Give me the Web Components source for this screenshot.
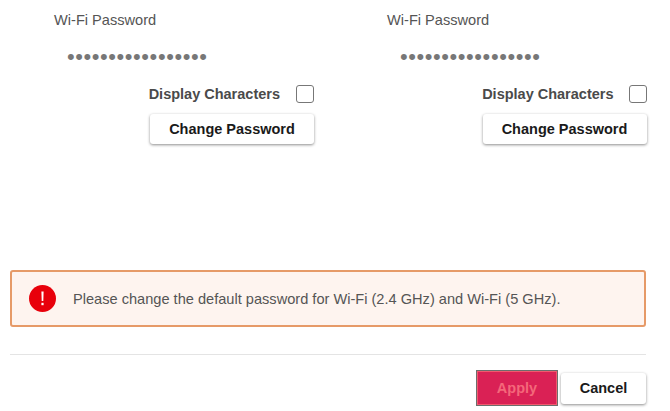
<!DOCTYPE html>
<html>
<head>
<meta charset="utf-8">
<style>
  html, body { margin: 0; background: #fff; }
  body { width: 670px; height: 411px; overflow: hidden; font-family: "Liberation Sans", Arial, sans-serif; }
  app-page { width: 670px; height: 411px; }
</style>
</head>
<body>
<app-page>
  <password-panel slot="panels"></password-panel>
  <password-panel slot="panels"></password-panel>
  <alert-box slot="alert">Please change the default password for Wi-Fi (2.4 GHz) and Wi-Fi (5 GHz).</alert-box>
  <flat-button slot="actions" kind="apply">Apply</flat-button>
  <flat-button slot="actions" kind="cancel">Cancel</flat-button>
</app-page>
<script>
class AppPage extends HTMLElement {
  constructor() {
    super();
    this.attachShadow({ mode: "open" });
    this.shadowRoot.innerHTML = `
      <style>
        :host { display: flex; flex-direction: column; box-sizing: border-box; padding: 0 24px 0 10px; }
        .panels { display: flex; height: 270px; padding-left: 44px; gap: 73px; }
        ::slotted(password-panel) { width: 260px; flex: none; }
        ::slotted(password-panel:last-of-type) { width: 259.5px; --show-gap: 15px; }
        .rule { height: 1px; background: #e4e4e4; margin-top: 27px; }
        .actions { display: flex; justify-content: flex-end; align-items: center; gap: 3px; margin-top: 15px; }
      </style>
      <div class="panels"><slot name="panels"></slot></div>
      <slot name="alert"></slot>
      <div class="rule"></div>
      <div class="actions"><slot name="actions"></slot></div>
    `;
  }
}

class PasswordPanel extends HTMLElement {
  constructor() {
    super();
    this.attachShadow({ mode: "open" });
    this.shadowRoot.innerHTML = `
      <style>
        :host { display: block; box-sizing: border-box; padding-top: 12px; }
        .label { font-size: 14.6px; line-height: 16px; color: #555; }
        .dots { font-size: 22px; line-height: 16px; letter-spacing: .56px; color: #777; margin: 21px 0 0 13px; white-space: nowrap; }
        .show { display: flex; justify-content: flex-end; align-items: center; margin-top: 20px; height: 18px; gap: var(--show-gap, 16px); font-size: 14.5px; font-weight: 700; color: #4a4a4a; }
        .box { box-sizing: border-box; width: 18px; height: 18px; border: 1.5px solid #777; border-radius: 3px; background: #fff; }
        .btnrow { display: flex; justify-content: flex-end; margin-top: 11px; }
      </style>
      <div class="label">Wi-Fi Password</div>
      <div class="dots">•••••••••••••••••</div>
      <div class="show"><span>Display Characters</span><span class="box"></span></div>
      <div class="btnrow"><flat-button kind="change">Change Password</flat-button></div>
    `;
  }
}

class AlertBox extends HTMLElement {
  constructor() {
    super();
    this.attachShadow({ mode: "open" });
    this.shadowRoot.innerHTML = `
      <style>
        :host { display: flex; align-items: center; box-sizing: border-box; width: 636px; height: 57px; padding-left: 18px; gap: 17px; background: #fef4ef; border: 2px solid #e69a68; border-radius: 3px; font-size: 14.6px; color: #555; }
        svg { flex: none; margin-left: -1px; }
      </style>
      <svg width="27" height="27" viewBox="0 0 27 27">
        <circle cx="13.5" cy="13.5" r="13.5" fill="#e8000b"/>
        <path d="M12.4 6.5h2.2l-.3 9.5h-1.6z" fill="#fff"/>
        <rect x="12.4" y="17.8" width="2.2" height="2.4" fill="#fff"/>
      </svg>
      <span><slot></slot></span>
    `;
  }
}

class FlatButton extends HTMLElement {
  constructor() {
    super();
    this.attachShadow({ mode: "open" });
    this.shadowRoot.innerHTML = `
      <style>
        :host { display: flex; align-items: center; justify-content: center; box-sizing: border-box; font-size: 14.5px; font-weight: 700; color: #1a1a1a; background: #fff; border-radius: 3px; box-shadow: 0 1px 3px rgba(0,0,0,.45); }
        :host([kind="change"]) { width: 164px; height: 30px; }
        :host([kind="cancel"]) { width: 85px; height: 31px; }
        :host([kind="apply"]) { width: 82px; height: 36px; color: #f4687a; background: #da2155; border: 2px solid #f2596e; outline: 1px solid #6d6d6d; outline-offset: -1px; border-radius: 0; box-shadow: none; }
      </style>
      <slot></slot>
    `;
  }
}

customElements.define("app-page", AppPage);
customElements.define("password-panel", PasswordPanel);
customElements.define("alert-box", AlertBox);
customElements.define("flat-button", FlatButton);
</script>
</body>
</html>
